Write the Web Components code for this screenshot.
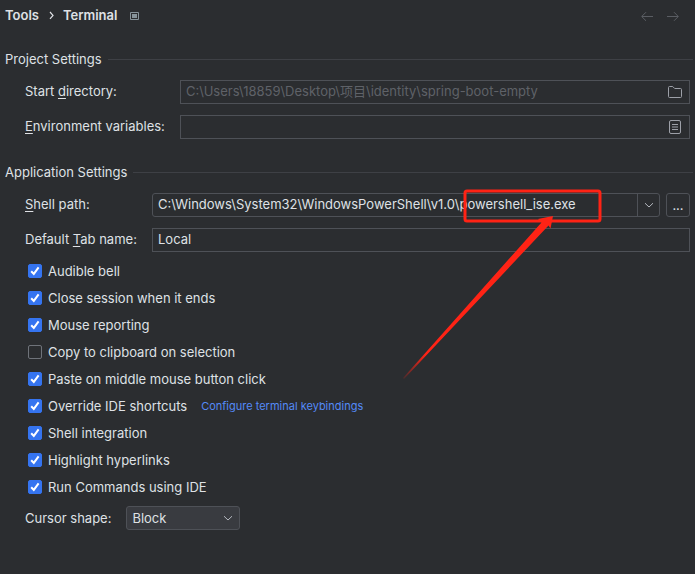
<!DOCTYPE html>
<html lang="en">
<head>
<meta charset="utf-8">
<title>Terminal settings</title>
<style>
body { margin: 0; background: #2b2d30; color: #dfe1e5; font: 13px/16px Inter, "Noto Sans CJK SC", sans-serif; }
</style>
</head>
<body>
<settings-page>
  <settings-header slot="header"></settings-header>
  <settings-section heading="Project Settings" style="--label: 155px">
    <text-field value="C:\Users\18859\Desktop\项目\identity\spring-boot-empty" dim icon="folder">Start <u>d</u>irectory:</text-field>
    <text-field icon="list"><u>E</u>nvironment variables:</text-field>
  </settings-section>
  <settings-section heading="Application Settings" style="--label: 127px">
    <path-field value="C:\Windows\System32\WindowsPowerShell\v1.0\powershell_ise.exe"><u>S</u>hell path:</path-field>
    <text-field value="Local">Default <u>T</u>ab name:</text-field>
    <check-list>
      <check-row checked>Audible bell</check-row>
      <check-row checked>Close session when it ends</check-row>
      <check-row checked>Mouse reporting</check-row>
      <check-row>Copy to clipboard on selection</check-row>
      <check-row checked>Paste on middle mouse button click</check-row>
      <check-row checked link="Configure terminal keybindings">Override IDE shortcuts</check-row>
      <check-row checked>Shell integration</check-row>
      <check-row checked>Highlight hyperlinks</check-row>
      <check-row checked>Run Commands using IDE</check-row>
    </check-list>
    <choice-field value="Block">Cursor shape:</choice-field>
  </settings-section>
  <red-callout slot="overlay"></red-callout>
</settings-page>

<script>
const base = `
*, *::before { box-sizing: border-box; }
svg { display: block; fill: none; flex: none; }
input, button, select { font: inherit; color: inherit; margin: 0; }
input:focus, select:focus { outline: none; }
button { display: grid; place-items: center; padding: 0; border: 0; background: none; }
::slotted(u) { text-underline-offset: 2px; text-decoration-skip-ink: none; }
`;
const define = (name, render) => customElements.define(name, class extends HTMLElement {
  connectedCallback() {
    if (!this.shadowRoot) this.attachShadow({ mode: 'open' }).innerHTML = `<style>${base}</style>` + render(this);
  }
});
const attr = (el, name) => el.getAttribute(name) || '';
const chevron = `<svg width="16" height="16" viewBox="0 0 16 16" stroke="#b4b8bf" aria-hidden="true"><path d="M4 6.2 8 10l4-3.8"/></svg>`;
const icons = {
  folder: `<button aria-label="Browse"><svg width="16" height="16" viewBox="0 0 16 16" stroke="#9da0a8"><path d="M1.5 3.5a1 1 0 0 1 1-1h3.2l2 2h5.8a1 1 0 0 1 1 1v7a1 1 0 0 1-1 1h-11a1 1 0 0 1-1-1z"/></svg></button>`,
  list: `<button aria-label="Edit variables"><svg width="16" height="16" viewBox="0 0 16 16" stroke="#9da0a8"><rect x="2.5" y="1.5" width="11" height="13" rx="1.5"/><path d="M5 5.5h6M5 8h6M5 10.5h6"/></svg></button>`
};
const rowCss = `
:host { display: grid; grid-template-columns: var(--label) minmax(0, 1fr); align-items: center; }
label { padding-bottom: 2px; }
.box { display: flex; align-items: center; height: 24px; border: 1px solid #4e5157; }
input { flex: 1; min-width: 0; padding: 0 5px 2px; border: 0; background: none; }
`;

define('settings-page', () => `<style>
:host { display: block; position: relative; min-height: 100vh; overflow: hidden; }
main { padding: 0 5px 32px; }
</style><slot name="header"></slot><main><slot></slot></main><slot name="overlay"></slot>`);

define('settings-header', () => `<style>
:host { display: flex; align-items: center; height: 32px; padding: 0 14px 0 5px; }
nav { display: flex; align-items: center; padding-bottom: 2px; font-weight: 600; }
.sep { margin: 0 4px; }
.pin { margin-left: 10px; }
.history { display: flex; gap: 10px; margin-left: auto; padding-top: 2px; }
</style>
<nav aria-label="Breadcrumb"><span>Tools</span>
<svg class="sep" width="16" height="16" viewBox="0 0 16 16" stroke="#dfe1e5" stroke-width="1.2"><path d="m7 5 3 3.4-3 3.4"/></svg>
<span>Terminal</span></nav>
<svg class="pin" width="16" height="16" viewBox="0 0 16 16"><path d="M3.5 4.5h8v7h-8z" stroke="#87939a"/><path d="M5 6h5v4H5z" fill="#87939a"/></svg>
<div class="history">
<button aria-label="Back"><svg width="16" height="16" viewBox="0 0 16 16" stroke="#5a5d63"><path d="M14 7.5H3M7 3.2 2.7 7.5 7 11.8"/></svg></button>
<button aria-label="Forward"><svg width="16" height="16" viewBox="0 0 16 16" stroke="#5a5d63"><path d="M2 7.5h11M9 3.2l4.3 4.3L9 11.8"/></svg></button>
</div>`);

define('settings-section', el => `<style>
:host { display: block; padding-top: 19px; }
:host(:not(:first-of-type)) { padding-top: 25px; }
h2 { display: flex; align-items: center; gap: 6px; margin: 0 -3px 13px 0; font: inherit; }
h2::after { content: ""; flex: 1; height: 1px; background: #3e4045; }
.rows { display: grid; gap: 11px; padding-left: 20px; }
</style><h2>${attr(el, 'heading')}</h2><div class="rows"><slot></slot></div>`);

define('text-field', el => `<style>${rowCss}
:host([dim]) input { color: #5f6268; }
.box button { width: 28px; height: 22px; }
</style><label for="f"><slot></slot></label>
<div class="box"><input id="f" type="text" value="${attr(el, 'value')}">${icons[attr(el, 'icon')] || ''}</div>`);

define('path-field', el => `<style>${rowCss}
.line { display: flex; gap: 6px; }
.box { flex: 1; min-width: 0; border-radius: 3px; }
.drop { width: 22px; height: 22px; border-left: 1px solid #4e5157; }
.more { width: 24px; height: 24px; border: 1px solid #4e5157; border-radius: 3px; }
</style><label for="f"><slot></slot></label>
<div class="line"><div class="box"><input id="f" type="text" value="${attr(el, 'value')}"><button class="drop" aria-label="Show paths">${chevron}</button></div>
<button class="more" aria-label="Browse">...</button></div>`);

define('check-list', () => `<style>:host { display: grid; gap: 11px; padding: 0 3px; }</style><slot></slot>`);

define('check-row', el => `<style>
:host { display: flex; align-items: center; height: 16px; }
label { display: flex; align-items: center; gap: 6px; }
.tick { display: grid; }
.tick > * { grid-area: 1 / 1; }
input { appearance: none; width: 14px; height: 14px; border: 1px solid #6f737a; border-radius: 2px; }
input:checked { border-color: #3574f0; background: #3574f0; }
svg { pointer-events: none; visibility: hidden; }
input:checked + svg { visibility: visible; }
a { margin-left: 14px; color: #548af7; font-size: 11px; text-decoration: none; }
</style><label><span class="tick"><input type="checkbox" ${el.hasAttribute('checked') ? 'checked' : ''}>
<svg width="14" height="14" viewBox="0 0 14 14" stroke="#fff" stroke-width="2" aria-hidden="true"><path d="m3.2 7.2 2.6 2.7 4.8-6.6"/></svg></span><slot></slot></label>
${el.hasAttribute('link') ? `<a href="#keybindings">${attr(el, 'link')}</a>` : ''}`);

define('choice-field', el => `<style>
:host { display: flex; align-items: center; gap: 15px; }
.pick { display: grid; align-items: center; width: 114px; }
.pick > * { grid-area: 1 / 1; }
select { appearance: none; width: 100%; height: 24px; padding: 0 24px 0 5px; border: 1px solid #4e5157; border-radius: 3px; background: #393b40; }
svg { justify-self: end; margin-right: 4px; pointer-events: none; }
</style><label for="s"><slot></slot></label>
<div class="pick"><select id="s"><option>${attr(el, 'value')}</option></select>${chevron}</div>`);

define('red-callout', () => `<style>
:host { position: absolute; left: 400px; top: 186px; pointer-events: none; }
</style><svg width="208" height="196" viewBox="400 186 208 196" aria-hidden="true">
<defs><linearGradient id="g" gradientUnits="userSpaceOnUse" x1="400" y1="382" x2="425" y2="354"><stop stop-color="#ff2315" stop-opacity="0"/><stop offset="1" stop-color="#ff2315"/></linearGradient></defs>
<rect x="465" y="191" width="135" height="30" rx="2" stroke="#ff2315" stroke-width="3"/>
<path fill="url(#g)" d="M403 378 541.5 222.5 538 219 553 216 550.5 228.5 548.5 225.5 404 379z"/>
</svg>`);
</script>
</body>
</html>
